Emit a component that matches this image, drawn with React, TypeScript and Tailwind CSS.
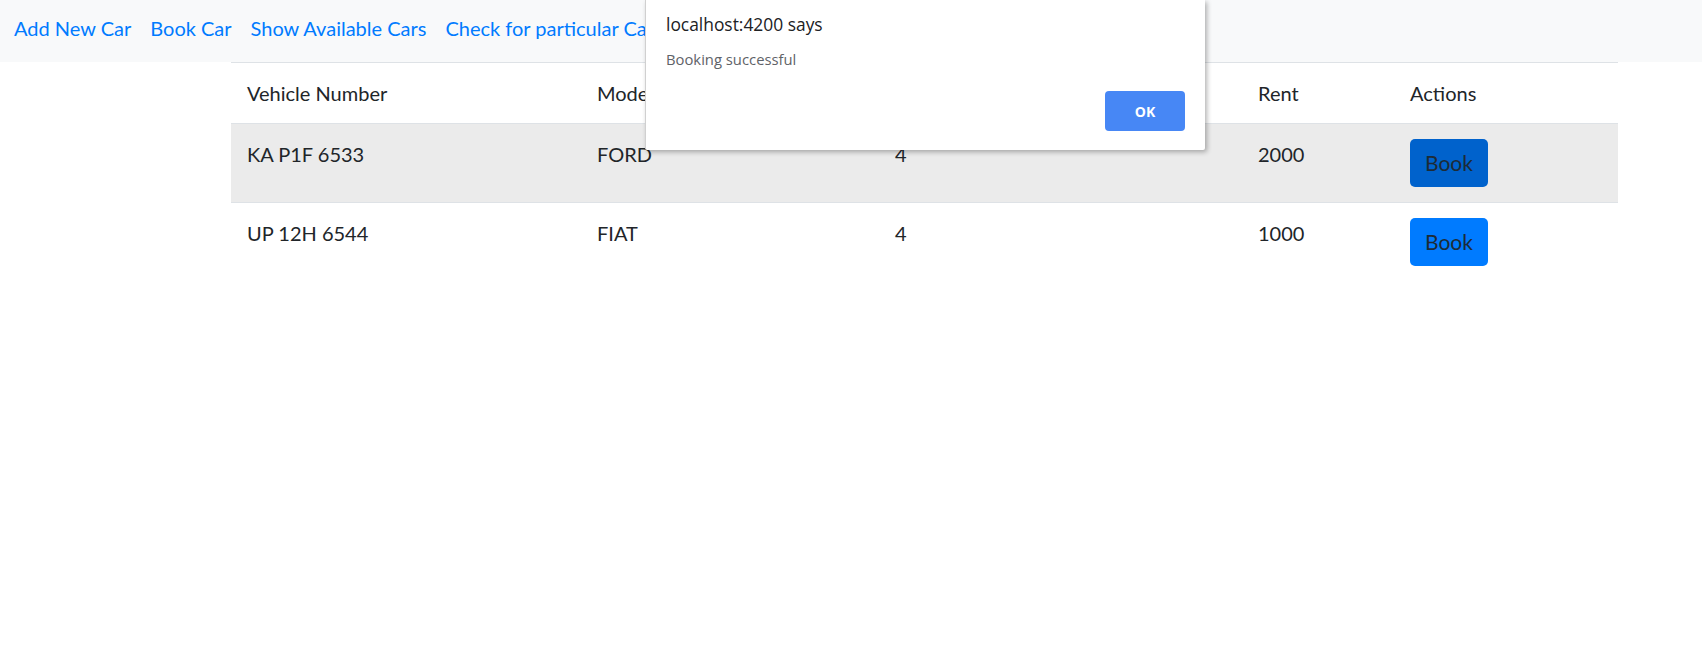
import React from 'react';

const cars = [
  { number: 'KA P1F 6533', model: 'FORD', seats: '4', rent: '2000', active: true },
  { number: 'UP 12H 6544', model: 'FIAT', seats: '4', rent: '1000', active: false },
];

const links = ['Add New Car', 'Book Car', 'Show Available Cars', 'Check for particular Car'];

const App = () => {
  return (
    <div className="relative min-h-[669px] bg-white text-[#212529] font-['Lato','Liberation_Sans',sans-serif]">
      {/* navbar */}
      <nav className="h-[62px] bg-[#f8f9fa] flex items-start pt-[13px] pl-[14px] gap-[19px] text-[20px]">
        {links.map((l) => (
          <a key={l} className="text-[#007bff] leading-[30px] cursor-pointer">
            {l}
          </a>
        ))}
      </nav>

      <div className="ml-[231px] w-[1387px]">
        <table className="w-full table-fixed border-collapse text-[20px]">
          <colgroup>
            <col className="w-[350px]" />
            <col className="w-[298px]" />
            <col className="w-[363px]" />
            <col className="w-[152px]" />
            <col className="w-[224px]" />
          </colgroup>
          <thead>
            <tr className="border-t border-[#dee2e6]">
              <th className="text-left font-normal px-[16px] py-[15px] leading-[30px]">Vehicle Number</th>
              <th className="text-left font-normal px-[16px] py-[15px] leading-[30px]">Model</th>
              <th className="text-left font-normal px-[16px] py-[15px] leading-[30px]">Seats</th>
              <th className="text-left font-normal px-[16px] py-[15px] leading-[30px]">Rent</th>
              <th className="text-left font-normal px-[16px] py-[15px] leading-[30px]">Actions</th>
            </tr>
          </thead>
          <tbody>
            {cars.map((c) => (
              <tr key={c.number} className={`border-t border-[#dee2e6] ${c.active ? 'bg-[#ebebeb]' : 'bg-white'}`}>
                <td className="align-top px-[16px] py-[15px] leading-[30px]">{c.number}</td>
                <td className="align-top px-[16px] py-[15px] leading-[30px]">{c.model}</td>
                <td className="align-top px-[16px] py-[15px] leading-[30px]">{c.seats}</td>
                <td className="align-top px-[16px] py-[15px] leading-[30px]">{c.rent}</td>
                <td className="align-top px-[16px] py-[15px] leading-[30px]">
                  <button
                    className={`h-[48px] w-[78px] rounded-[5px] text-[21px] text-[#1d2b36] ${
                      c.active ? 'bg-[#0062cc]' : 'bg-[#007bff]'
                    }`}
                  >
                    Book
                  </button>
                </td>
              </tr>
            ))}
          </tbody>
        </table>
      </div>

      {/* browser alert */}
      <div className="absolute top-0 left-[645px] w-[560px] h-[150px] bg-white border-l border-[#d0d0d0] rounded-b-[2px] shadow-[2px_2px_5px_rgba(0,0,0,0.3)] font-['Open_Sans','Liberation_Sans',sans-serif]">
        <div className="pl-[20px] pt-[12px] text-[17.4px] leading-[24px] text-[#202124]">localhost:4200 says</div>
        <div className="pl-[20px] pt-[12px] text-[14.8px] leading-[22px] text-[#5f6368]">Booking successful</div>
        <div className="flex justify-end pr-[20px] pt-[21px]">
          <button className="w-[80px] h-[40px] rounded-[4px] bg-[#4787f5] text-white text-[14px] font-bold">OK</button>
        </div>
      </div>
    </div>
  );
};

export default App;
